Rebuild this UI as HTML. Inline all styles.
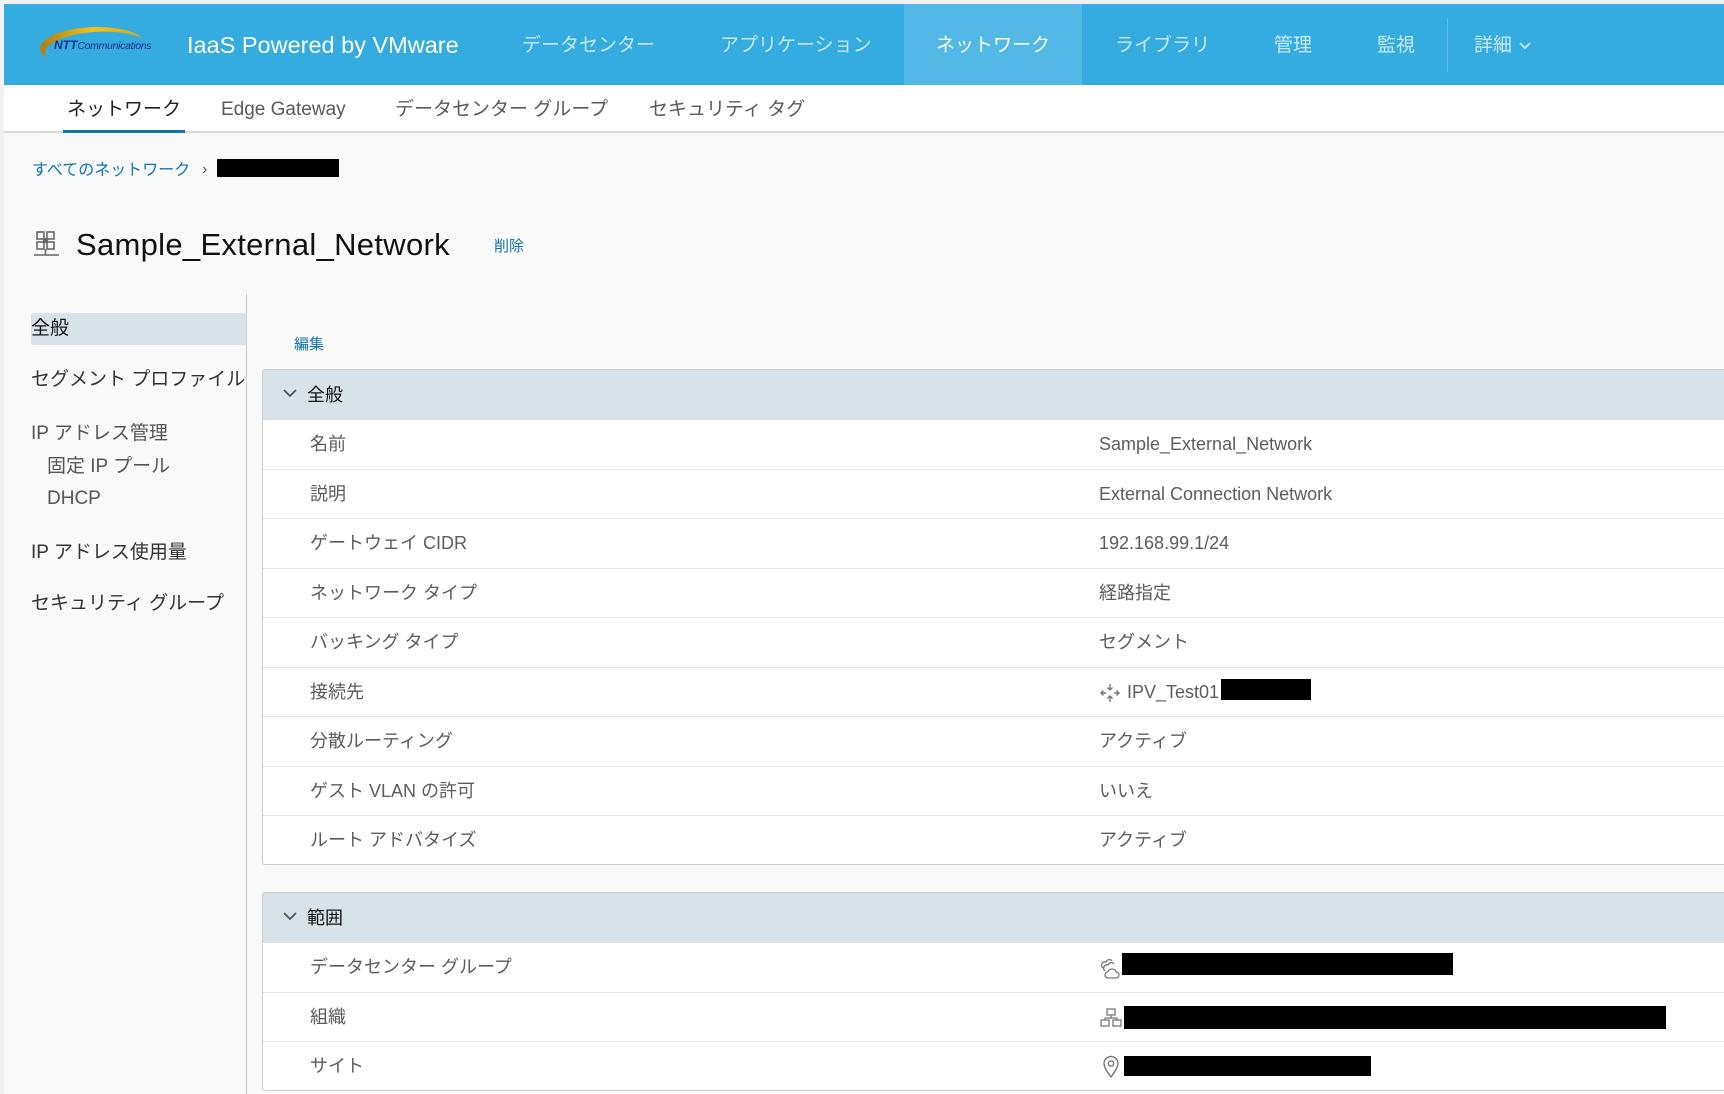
<!DOCTYPE html>
<html><head><meta charset="utf-8">
<style>
*{margin:0;padding:0;box-sizing:border-box}
body{width:1724px;height:1094px;overflow:hidden;background:#f0f0f0;font-family:"Liberation Sans","Noto Sans CJK JP",sans-serif;position:relative}
.a{position:absolute;white-space:nowrap}
#page{position:absolute;left:4px;top:4px;width:1720px;height:1090px;background:#f9f9f9}
#top{position:absolute;left:4px;top:4px;width:1720px;height:81px;background:#35acdf}
.nav{color:#c8e8f6;font-size:19px;top:35px;line-height:22px}
#sub{position:absolute;left:4px;top:85px;width:1720px;height:48px;background:#fff;border-bottom:2px solid #d8d8d8}
.st{font-size:19px;color:#5a5a5a;top:99px;line-height:22px}
.ln{font-size:19px;color:#333;line-height:22px}
.card{position:absolute;left:262px;width:1470px;background:#fff;border:1px solid #ccc;border-radius:3px}
.hd{height:50px;background:#d8e2e9;position:relative;border-bottom:1px solid #ddd}
.row{height:49.5px;border-bottom:1px solid #e6e6e6;position:relative}
.row:last-child{border-bottom:none}
.lb{position:absolute;left:47px;top:13px;font-size:18px;color:#5c5c5c;line-height:22px;white-space:nowrap}
.vl{position:absolute;left:836px;top:13px;font-size:18px;color:#5c5c5c;line-height:22px;white-space:nowrap}
.ht{position:absolute;left:44px;top:14px;font-size:18px;color:#111;line-height:22px}
.chev{position:absolute;left:19px;top:17px}
.blk{position:absolute;background:#000}
</style></head><body>
<div id="page"></div>
<div id="top"></div>
<div class="a" style="left:904px;top:4px;width:178px;height:81px;background:#52b8e6"></div>
<svg class="a" style="left:34px;top:24px" width="142" height="40" viewBox="0 0 142 40">
<defs><linearGradient id="g" x1="0" x2="1"><stop offset="0" stop-color="#b07d10"/><stop offset="0.5" stop-color="#f0c020"/><stop offset="1" stop-color="#d8a81a"/></linearGradient></defs>
<path d="M14 34 C-6 24 14 4 62 3 C88 3 104 9 108 14 C96 8 72 6 50 9 C22 13 4 24 14 34Z" fill="url(#g)"/>
<text x="20" y="25" font-family="Liberation Sans" font-size="12" font-style="italic" font-weight="bold" fill="#1d2f8a">NTT<tspan font-weight="normal" font-size="10.5" letter-spacing="-0.3">Communications</tspan></text>
</svg>
<div class="a" style="left:187px;top:32px;font-size:23.5px;color:#fff;line-height:26px">IaaS Powered by VMware</div>
<div class="a nav" style="left:522px">データセンター</div>
<div class="a nav" style="left:720px">アプリケーション</div>
<div class="a nav" style="left:936px;color:#fff">ネットワーク</div>
<div class="a nav" style="left:1115px">ライブラリ</div>
<div class="a nav" style="left:1274px">管理</div>
<div class="a nav" style="left:1377px">監視</div>
<div class="a" style="left:1447px;top:18px;width:1px;height:54px;background:#5cbde6"></div>
<div class="a nav" style="left:1474px">詳細</div>
<svg class="a" style="left:1518px;top:41px" width="14" height="10"><path d="M2 2 L7 7 L12 2" fill="none" stroke="#c8e8f6" stroke-width="1.8"/></svg>

<div id="sub"></div>
<div class="a st" style="left:67px;color:#222">ネットワーク</div>
<div class="a" style="left:63px;top:130px;width:122px;height:3px;background:#0f77a8"></div>
<div class="a st" style="left:221px">Edge Gateway</div>
<div class="a st" style="left:395px">データセンター グループ</div>
<div class="a st" style="left:649px">セキュリティ タグ</div>

<div class="a" style="left:32px;top:162px;font-size:16px;color:#0f75b0;line-height:18px">すべてのネットワーク</div>
<div class="a" style="left:202px;top:161px;font-size:16px;color:#555">›</div>
<div class="blk" style="left:217px;top:159px;width:122px;height:18px"></div>

<svg class="a" style="left:33px;top:230px" width="28" height="28" viewBox="0 0 28 28">
<g fill="none" stroke="#666" stroke-width="1.6"><rect x="4" y="2" width="7" height="7"/><rect x="14" y="2" width="7" height="7"/><rect x="4" y="12" width="7" height="7"/><rect x="14" y="12" width="7" height="7"/></g>
<rect x="10" y="8" width="5" height="5" fill="#666"/>
<path d="M12.5 19 V25 M1 25 H26" stroke="#666" stroke-width="1.6"/>
</svg>
<div class="a" style="left:76px;top:227px;font-size:31px;color:#111;line-height:36px;letter-spacing:0.3px">Sample_External_Network</div>
<div class="a" style="left:494px;top:238px;font-size:15px;color:#0f75b0;line-height:18px">削除</div>

<div class="a" style="left:246px;top:294px;width:1px;height:800px;background:#ccc"></div>
<div class="a" style="left:31px;top:313px;width:215px;height:32px;background:#d8e2e9;border-radius:3px 0 0 3px"></div>
<div class="a ln" style="left:31px;top:318px;color:#111">全般</div>
<div class="a ln" style="left:31px;top:369px">セグメント プロファイル</div>
<div class="a ln" style="left:31px;top:423px;color:#555">IP アドレス管理</div>
<div class="a ln" style="left:47px;top:456px;color:#555">固定 IP プール</div>
<div class="a ln" style="left:47px;top:488px;color:#555">DHCP</div>
<div class="a ln" style="left:31px;top:542px">IP アドレス使用量</div>
<div class="a ln" style="left:31px;top:593px">セキュリティ グループ</div>

<div class="a" style="left:294px;top:336px;font-size:15px;color:#0f75b0;line-height:18px">編集</div>

<div class="card" style="top:369px;height:496px">
<div class="hd"><svg class="chev" width="16" height="12"><path d="M2 3 L8 9 L14 3" fill="none" stroke="#555" stroke-width="1.8"/></svg><div class="ht">全般</div></div>
<div class="row"><div class="lb">名前</div><div class="vl">Sample_External_Network</div></div>
<div class="row"><div class="lb">説明</div><div class="vl">External Connection Network</div></div>
<div class="row"><div class="lb">ゲートウェイ CIDR</div><div class="vl">192.168.99.1/24</div></div>
<div class="row"><div class="lb">ネットワーク タイプ</div><div class="vl">経路指定</div></div>
<div class="row"><div class="lb">バッキング タイプ</div><div class="vl">セグメント</div></div>
<div class="row"><div class="lb">接続先</div>
<svg style="position:absolute;left:837px;top:15px" width="20" height="20" viewBox="0 0 20 20"><g fill="none" stroke="#777" stroke-width="1.4"><path d="M10 1V7M7.5 4.5L10 7L12.5 4.5M10 19V13M7.5 15.5L10 13L12.5 15.5M1 10H6M3.5 7.5L1 10L3.5 12.5M19 10H14M16.5 7.5L19 10L16.5 12.5"/></g></svg>
<div class="vl" style="left:864px">IPV_Test01</div><div class="blk" style="left:958px;top:11px;width:90px;height:21px"></div></div>
<div class="row"><div class="lb">分散ルーティング</div><div class="vl">アクティブ</div></div>
<div class="row"><div class="lb">ゲスト VLAN の許可</div><div class="vl">いいえ</div></div>
<div class="row"><div class="lb">ルート アドバタイズ</div><div class="vl">アクティブ</div></div>
</div>

<div class="card" style="top:892px;height:199px">
<div class="hd"><svg class="chev" width="16" height="12"><path d="M2 3 L8 9 L14 3" fill="none" stroke="#555" stroke-width="1.8"/></svg><div class="ht">範囲</div></div>
<div class="row"><div class="lb">データセンター グループ</div>
<svg style="position:absolute;left:836px;top:13px" width="24" height="24" viewBox="0 0 24 24"><g fill="none" stroke="#777" stroke-width="1.3"><path d="M4 12 C1 10 3 5 7 6 C8 3 12 3 13 5"/><path d="M6 15 C3 13 5 8 9 9 C10 6 14 6 15 8"/><path d="M9 22 C5 22 5 16 9 16 C10 12 16 12 17 16 C21 16 21 22 17 22Z"/></g></svg>
<div class="blk" style="left:859px;top:10px;width:331px;height:22px"></div></div>
<div class="row"><div class="lb">組織</div>
<svg style="position:absolute;left:837px;top:14px" width="22" height="22" viewBox="0 0 22 22"><g fill="none" stroke="#777" stroke-width="1.3"><rect x="7" y="2" width="8" height="6"/><rect x="1" y="13" width="8" height="6"/><rect x="13" y="13" width="8" height="6"/><path d="M11 8V11M5 13V11H17V13"/></g></svg>
<div class="blk" style="left:861px;top:13px;width:542px;height:23px"></div></div>
<div class="row"><div class="lb">サイト</div>
<svg style="position:absolute;left:839px;top:13px" width="18" height="24" viewBox="0 0 18 24"><g fill="none" stroke="#777" stroke-width="1.4"><path d="M9 22 C3 14 2 11 2 8.5 A7 7 0 0 1 16 8.5 C16 11 15 14 9 22Z"/><circle cx="9" cy="8.5" r="2.6"/></g></svg>
<div class="blk" style="left:861px;top:14px;width:247px;height:20px"></div></div>
</div>
</body></html>
